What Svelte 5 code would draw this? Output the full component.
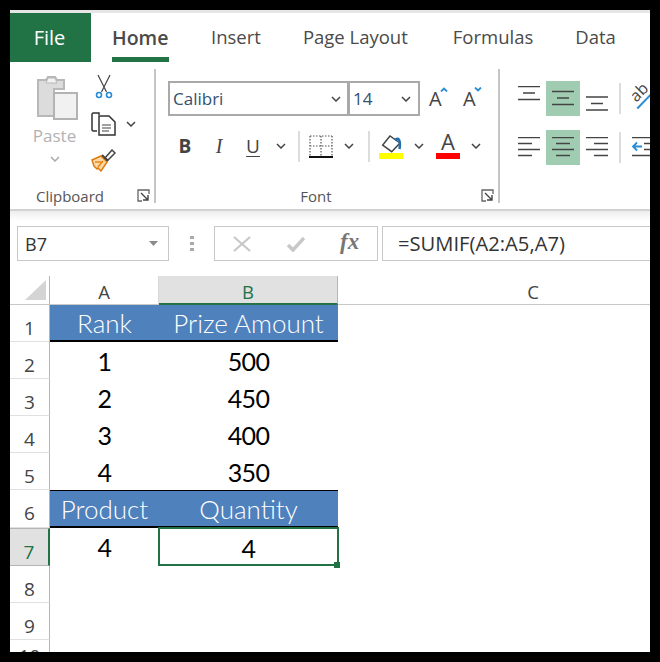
<script>
  const tabs = ['Home', 'Insert', 'Page Layout', 'Formulas', 'Data'];
  const rows = [
    { n: 1, a: 'Rank', b: 'Prize Amount', head: true },
    { n: 2, a: '1', b: '500' },
    { n: 3, a: '2', b: '450' },
    { n: 4, a: '3', b: '400' },
    { n: 5, a: '4', b: '350' },
    { n: 6, a: 'Product', b: 'Quantity', head: true, ruled: true },
    { n: 7, a: '4', b: '4', active: true },
    { n: 8, a: '', b: '' },
    { n: 9, a: '', b: '' },
    { n: 10, a: '', b: '', cut: true }
  ];
  const vertical = [[0, 0], [1, 5], [2, 10.5]];
  const horizontal = [
    [[0, 22], [0, 14], [0, 22], [0, 14]],
    [[0, 22], [4, 14], [0, 22], [4, 14]],
    [[0, 22], [8, 14], [0, 22], [8, 14]]
  ];
</script>

{#snippet chev(color = '#444')}
  <svg class="chev" width="10" height="6" viewBox="0 0 10 6"><path d="M1 1l4 4 4-4" fill="none" stroke={color} stroke-width="1.5"/></svg>
{/snippet}

{#snippet launcher()}
  <svg class="launcher" width="13" height="13" viewBox="0 0 13 13"><path d="M12 5V1H1v11h4" fill="none" stroke="#666" stroke-width="1.3"/><path d="M4 4l7 7M11 6v5H6" fill="none" stroke="#444" stroke-width="1.4"/></svg>
{/snippet}

<div class="frame">
  <div class="window">
    <nav class="tabs">
      <div class="file">File</div>
      {#each tabs as tab, i}
        <div class="tab" class:current={i === 0}>{tab}</div>
      {/each}
    </nav>

    <section class="ribbon">
      <div class="group clipboard">
        <div class="body">
          <div class="paste">
            <svg width="41" height="46" viewBox="0 0 41 46">
              <path d="M1 5h8l2-3h7l2 3h7v9H17v27H1z" fill="#dcdcdc" stroke="#b8b8b8" stroke-width="2"/>
              <path d="M9 8l2-5h7l2 5z" fill="#f2f2f2" stroke="#b8b8b8"/>
              <rect x="17" y="18" width="23" height="26" fill="#f1f1f1" stroke="#b3b3b3" stroke-width="2"/>
            </svg>
            <span>Paste</span>
            {@render chev('#aaa')}
          </div>
          <div class="clip-tools">
            <svg width="18" height="25" viewBox="0 0 18 25">
              <path d="M3 1l8.500 17M15 1L6.500 18" fill="none" stroke="#444" stroke-width="1.2"/>
              <circle cx="4" cy="21" r="2.500" fill="none" stroke="#2a8dd4" stroke-width="1.600"/>
              <circle cx="14" cy="21" r="2.500" fill="none" stroke="#2a8dd4" stroke-width="1.600"/>
            </svg>
            <div class="copy">
              <svg width="25" height="24" viewBox="0 0 25 24">
                <path d="M8 3V1H2L1 2v16l1 1h4" fill="none" stroke="#333" stroke-width="1.500"/>
                <path d="M8 4h10l6 6v13H8z" fill="#fff" stroke="#333" stroke-width="1.500"/>
                <path d="M11 13h9M11 16h9M11 19h7" stroke="#444" stroke-width="1.200"/>
              </svg>
              {@render chev()}
            </div>
            <svg width="25" height="23" viewBox="0 0 25 23">
              <path d="M1 11l9-4 6 6-6 9-3-3-1 1-3-3z" fill="#fbd9a8" stroke="#e07c0c" stroke-width="1.500"/>
              <path d="M4 13h8M7 18l5-6" stroke="#e8871a" stroke-width="1.500"/>
              <path d="M14 9l7-8 3 3-7 7z" fill="#fff" stroke="#444" stroke-width="1.500"/>
              <path d="M11 6l6 6" stroke="#444" stroke-width="2"/>
            </svg>
          </div>
        </div>
        <div class="label">Clipboard{@render launcher()}</div>
      </div>

      <div class="group font">
        <div class="body font-body">
          <div class="font-row">
            <div class="combo name"><span>Calibri</span>{@render chev()}</div>
            <div class="combo size"><span>14</span>{@render chev()}</div>
            <div class="grow-btn">A<svg width="8" height="5" viewBox="0 0 8 5"><path d="M1 4.500L4 1.500 7 4.500" fill="none" stroke="#2a8dd4" stroke-width="1.800"/></svg></div>
            <div class="grow-btn shrink">A<svg width="8" height="5" viewBox="0 0 8 5"><path d="M1 .5L4 3.500 7 .5" fill="none" stroke="#2a8dd4" stroke-width="1.800"/></svg></div>
          </div>
          <div class="format-row">
            <span class="fmt bold">B</span>
            <span class="fmt italic">I</span>
            <span class="fmt underline">U</span>
            {@render chev()}
            <i class="vsep one"></i>
            <svg class="borders" width="24" height="23" viewBox="0 0 24 23">
              <path d="M1 1h22M1 1v20M23 1v20M12 1v20M1 11h22" fill="none" stroke="#555" stroke-width="1.200" stroke-dasharray="1.500 1.500"/>
              <path d="M0 22h24" stroke="#111" stroke-width="2"/>
            </svg>
            {@render chev()}
            <i class="vsep two"></i>
            <div class="color">
              <svg width="24" height="18" viewBox="0 0 24 18">
                <path d="M11 1L3.700 10l9 6.700L21 8z" fill="#fff" stroke="#444" stroke-width="1.500"/>
                <path d="M16 5c3-3 6-1 4.500 9" fill="none" stroke="#1f6fb5" stroke-width="2.500"/>
              </svg>
              <b class="yellow"></b>
            </div>
            {@render chev()}
            <div class="color letter">
              <span>A</span>
              <b class="red"></b>
            </div>
            {@render chev()}
          </div>
        </div>
        <div class="label">Font{@render launcher()}</div>
      </div>

      <div class="group align">
        <div class="align-row">
          {#each vertical as [box, offset]}
            <div class="align-btn" class:on={box === 1}>
              <svg width="22" height="26" viewBox="0 0 22 26">
                <path d="M0 {0.5 + offset}h22M5 {7 + offset}h12M0 {13.5 + offset}h22" stroke="#444" stroke-width="1.500"/>
              </svg>
            </div>
          {/each}
          <i class="vsep small"></i>
          <svg class="orient" width="34" height="34" viewBox="0 0 34 34">
            <text x="-1" y="17" transform="rotate(-45 6 12.500)" class="ab">ab</text>
            <path d="M5.300 26.500L27 4" stroke="#2a8dd4" stroke-width="2"/>
          </svg>
        </div>
        <div class="align-row">
          {#each horizontal as lines, i}
            <div class="align-btn" class:on={i === 1}>
              <svg width="22" height="22" viewBox="0 0 22 22">
                {#each lines as [x, w], k}
                  <path d="M{x} {0.5 + k * 6}h{w}" stroke="#444" stroke-width="1.500"/>
                {/each}
              </svg>
            </div>
          {/each}
          <i class="vsep small"></i>
          <svg class="orient" width="34" height="22" viewBox="0 0 34 22">
            <path d="M0 .5h24M12 6.500h12M12 12.500h12M0 18.500h24" stroke="#444" stroke-width="1.500"/>
            <path d="M10 9.500H1M5 5.500l-4 4 4 4" fill="none" stroke="#2a8dd4" stroke-width="1.800"/>
          </svg>
        </div>
      </div>
    </section>
    <div class="shadow"></div>

    <div class="formula-bar">
      <div class="namebox"><span>B7</span><svg width="9" height="5" viewBox="0 0 9 5"><path d="M0 0h9L4.500 5z" fill="#8a8a8a"/></svg></div>
      <div class="dots"><i></i><i></i><i></i></div>
      <div class="fx-box">
        <svg width="18" height="16" viewBox="0 0 18 16"><path d="M1 1l16 14M17 1L1 15" stroke="#c8c8c8" stroke-width="2.200"/></svg>
        <svg width="18" height="16" viewBox="0 0 18 16"><path d="M1 9l5 5L17 2" fill="none" stroke="#c8c8c8" stroke-width="3.500"/></svg>
        <span class="fx">fx</span>
      </div>
      <div class="formula">=SUMIF(A2:A5,A7)</div>
    </div>

    <div class="sheet">
      <div class="corner"><svg width="21" height="20" viewBox="0 0 21 20"><path d="M21 0v20H0z" fill="#d4d4d4"/></svg></div>
      <div class="col-head">A</div>
      <div class="col-head sel">B</div>
      <div class="col-head last">C</div>

      {#each rows as row}
        <div class="row-head" class:sel={row.active} class:cut={row.cut}>{row.n}</div>
        <div class="cell" class:head={row.head} class:ruled={row.ruled}>{row.a}</div>
        <div class="cell" class:head={row.head} class:ruled={row.ruled} class:picked={row.active}>
          {row.b}
          {#if row.active}<i class="handle"></i>{/if}
        </div>
        <div class="cell blank"></div>
      {/each}
    </div>
  </div>
</div>

<style>
  :global(body) {
    margin: 0;
    background: #000;
  }

  .frame {
    width: 660px;
    height: 662px;
    box-sizing: border-box;
    padding: 10px;
    background: #000;
    overflow: hidden;
  }

  .window {
    width: 640px;
    height: 642px;
    background: #fff;
    overflow: hidden;
    font-family: "Open Sans", "Noto Sans", sans-serif;
    color: #444;
  }

  .tabs {
    display: flex;
    align-items: stretch;
    height: 50px;
    box-sizing: border-box;
    border-top: 3px solid #e6e6e6;
    font-size: 19px;
  }

  .file {
    width: 81px;
    height: 49px;
    background: #217346;
    color: #fff;
    display: flex;
    align-items: center;
    justify-content: center;
    padding-right: 2px;
    box-sizing: border-box;
    font-weight: 500;
    font-size: 20px;
  }

  .tab {
    margin-left: 42px;
    padding-top: 11px;
    white-space: nowrap;
    font-size: 18.500px;
    color: #4a4a4a;
  }

  .tab:nth-child(5) {
    margin-left: 45px;
  }

  .tab:nth-child(6) {
    margin-left: 42px;
  }

  .tab.current {
    margin-left: 21px;
    font-weight: 600;
    height: 33px;
    border-bottom: 5px solid #217346;
    width: 57px;
    font-size: 19.500px;
  }

  .ribbon {
    display: flex;
    height: 149px;
    border-bottom: 2px solid #d2d2d2;
    overflow: hidden;
  }

  .shadow {
    height: 10px;
    background: linear-gradient(#ededed, #fff);
  }

  .group {
    margin-top: 9px;
    height: 134px;
    border-right: 2px solid #c6c6c6;
    position: relative;
    flex: none;
  }

  .body {
    height: 117px;
  }

  .label {
    text-align: center;
    font-size: 15px;
    line-height: 20px;
    color: #555;
  }

  .clipboard .label {
    padding-right: 24px;
  }

  .font .label {
    padding-right: 22px;
  }

  .launcher {
    position: absolute;
    right: 4px;
    bottom: 1px;
  }

  .clipboard {
    width: 146px;
    box-sizing: border-box;
  }

  .clipboard .body {
    display: flex;
  }

  .paste {
    width: 41px;
    margin-left: 27px;
    padding-top: 6px;
    display: flex;
    flex-direction: column;
    align-items: center;
    font-size: 17px;
    color: #b2b2b2;
  }

  .paste span {
    line-height: 22px;
    margin: 4px 6px 0 0;
  }

  .paste .chev {
    margin: 9px 6px 0 0;
  }

  .clip-tools {
    margin-left: 13px;
    padding-top: 5px;
    display: flex;
    flex-direction: column;
    gap: 13px;
    align-items: flex-start;
  }

  .clip-tools > svg:first-child {
    margin-left: 4px;
  }

  .copy {
    display: flex;
    align-items: center;
    gap: 10px;
  }

  .font {
    width: 342px;
  }

  .font-body {
    padding: 12px 0 0 12px;
    box-sizing: border-box;
  }

  .font-row {
    display: flex;
    align-items: center;
    height: 35px;
  }

  .combo {
    height: 35px;
    box-sizing: border-box;
    border: 2px solid #a9a9a9;
    display: flex;
    align-items: center;
    justify-content: space-between;
    padding: 0 4px 0 3px;
    font-size: 17px;
    color: #33506f;
  }

  .combo.name {
    width: 181px;
  }

  .combo.size {
    width: 72px;
    margin-left: -1px;
  }

  .combo.size .chev {
    margin-right: 3px;
  }

  .combo.name .chev {
    margin-right: 2px;
  }

  .grow-btn {
    margin-left: 9px;
    width: 24px;
    display: flex;
    align-items: flex-start;
    font-size: 20px;
    line-height: 24px;
    color: #444;
  }

  .grow-btn svg {
    margin: 0 0 0 -2px;
  }

  .grow-btn.shrink {
    margin-left: 10px;
  }

  .format-row {
    display: flex;
    align-items: center;
    height: 34px;
    margin-top: 13px;
    padding-left: 10px;
  }

  .fmt {
    width: 34px;
    text-align: center;
    font-size: 19px;
    color: #444;
  }

  .bold {
    font-weight: 700;
    width: 14px;
  }

  .italic {
    margin-left: 15px;
    width: 24px;
    font-family: "Liberation Serif", serif;
    font-style: italic;
    font-size: 20px;
  }

  .underline {
    width: 20px;
    margin-left: 12px;
    text-decoration: underline;
    text-underline-offset: 3px;
  }

  .format-row > .chev {
    margin-left: 13px;
  }

  .vsep {
    display: block;
    width: 2px;
    height: 31px;
    background: #dcdcdc;
    flex: none;
  }

  .vsep.one {
    margin-left: 12px;
  }

  .borders {
    margin-left: 9px;
  }

  .format-row > .borders + .chev {
    margin-left: 11px;
  }

  .vsep.two {
    margin-left: 14px;
  }

  .color {
    width: 24px;
    height: 28px;
    margin: 0 0 2px 9px;
    display: flex;
    flex-direction: column;
    align-items: center;
    justify-content: flex-end;
  }

  .format-row > .color + .chev {
    margin-left: 11px;
  }

  .color b {
    display: block;
    width: 24px;
    height: 6px;
    flex: none;
  }

  .yellow {
    background: #ffff00;
  }

  .red {
    background: #ff0000;
  }

  .letter {
    margin-left: 12px;
  }

  .letter span {
    font-size: 22px;
    line-height: 20px;
    height: 22px;
    color: #444;
  }

  .align {
    border-right: none;
    margin-top: 21px;
    padding-left: 12px;
    display: flex;
    flex-direction: column;
    gap: 14px;
    height: auto;
  }

  .align-row {
    display: flex;
    align-items: center;
    height: 35px;
  }

  .align-btn {
    width: 34px;
    height: 35px;
    display: flex;
    align-items: center;
    justify-content: center;
  }

  .align-btn.on {
    background: #a0ccb2;
  }

  .vsep.small {
    margin-left: 5px;
    margin-right: 11px;
  }

  .orient {
    flex: none;
  }

  .ab {
    font-size: 16px;
    fill: #444;
    font-family: "Open Sans", sans-serif;
  }

  .formula-bar {
    display: flex;
    align-items: stretch;
    height: 35px;
    margin-top: 5px;
    padding-left: 7px;
  }

  .namebox {
    width: 152px;
    flex: none;
    box-sizing: border-box;
    border: 1px solid #c8c8c8;
    display: flex;
    align-items: center;
    justify-content: space-between;
    padding: 0 10px 0 7px;
    font-size: 18px;
    color: #333;
  }

  .dots {
    width: 45px;
    flex: none;
    display: flex;
    flex-direction: column;
    align-items: center;
    justify-content: center;
    gap: 3px;
  }

  .dots i {
    display: block;
    width: 4px;
    height: 3px;
    background: #a8a8a8;
  }

  .fx-box {
    width: 164px;
    flex: none;
    box-sizing: border-box;
    border: 1px solid #c8c8c8;
    display: flex;
    align-items: center;
    padding-left: 18px;
    gap: 36px;
  }

  .fx {
    font-family: "Liberation Serif", serif;
    font-style: italic;
    font-weight: 700;
    font-size: 23px;
    color: #777;
    margin-left: -1px;
    margin-top: -4px;
  }

  .formula {
    margin-left: 4px;
    flex: none;
    width: 268px;
    box-sizing: border-box;
    border: 1px solid #c8c8c8;
    border-right: none;
    padding-left: 15px;
    font-size: 20.200px;
    line-height: 33px;
    color: #333;
    white-space: nowrap;
  }

  .sheet {
    display: grid;
    grid-template-columns: 40px 109px 179px 390px;
    grid-template-rows: 29px 37px 37px 37px 37px 37px 38px 38px 37px 37px 37px;
    margin-top: 15px;
    font-family: "Lato", sans-serif;
    color: #000;
  }

  .corner {
    border-right: 1px solid #b5b5b5;
    border-bottom: 1px solid #c8c8c8;
    display: flex;
    align-items: flex-end;
    justify-content: flex-end;
    padding: 0 3px 4px 0;
  }

  .col-head {
    border-right: 1px solid #d8d8d8;
    border-bottom: 1px solid #c8c8c8;
    text-align: center;
    font-family: "Open Sans", sans-serif;
    font-size: 18.500px;
    line-height: 31px;
    color: #444;
    box-sizing: border-box;
  }

  .col-head.sel {
    background: #e1e1e1;
    color: #217346;
    border-bottom: 2px solid #217346;
    border-right-color: #b5b5b5;
  }

  .col-head.last {
    border-right: none;
  }

  .row-head {
    border-right: 1px solid #b5b5b5;
    border-bottom: 1px solid #e0e0e0;
    text-align: center;
    font-family: "Open Sans", sans-serif;
    font-size: 19px;
    line-height: 47px;
    color: #444;
    overflow: hidden;
    height: 100%;
    box-sizing: border-box;
  }

  .row-head.sel {
    background: #e1e1e1;
    color: #217346;
    border-right: 2px solid #217346;
    border-top: 1px solid #b5b5b5;
    border-bottom: 1px solid #b5b5b5;
    line-height: 46px;
  }

  .row-head.cut {
    line-height: 33px;
  }

  .cell {
    text-align: center;
    font-size: 25px;
    letter-spacing: -0.6px;
    line-height: 39px;
    position: relative;
    box-sizing: border-box;
    white-space: nowrap;
  }

  .cell.head {
    background: #4f81bd;
    color: #fff;
    font-weight: 300;
    font-size: 26px;
    letter-spacing: 0;
    line-height: 37px;
    border-bottom: 2px solid #000;
  }

  .cell.ruled {
    border-top: 1px solid #000;
  }

  .cell.blank {
    background: #fff;
  }

  .cell.picked {
    border: 2px solid #217346;
    line-height: 38px;
    margin: -1px -1px 0;
    z-index: 1;
  }

  .handle {
    position: absolute;
    right: -3px;
    bottom: -4px;
    width: 6px;
    height: 6px;
    background: #217346;
  }
</style>
